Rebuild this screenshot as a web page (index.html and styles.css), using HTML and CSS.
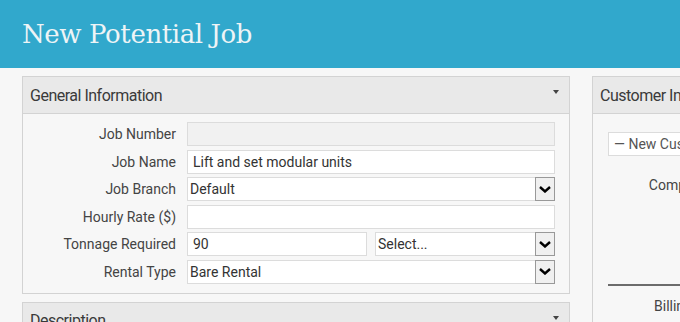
FILE: index.html
```html
<!DOCTYPE html>
<html lang="en">
<head>
    <meta charset="UTF-8">
    <meta name="viewport" content="width=device-width, initial-scale=1.0">
    <title>New Potential Job</title>
    <link rel="stylesheet" href="styles.css">
</head>
<body>

    <header class="page-header">
        <h1>New Potential Job</h1>
    </header>

    <div class="columns">
        <div class="column">
            <section class="panel">
                <div class="panel-head">
                    <h2>General Information</h2>
                    <span class="caret"></span>
                </div>
                <div class="panel-body form-grid">
                    <label>Job Number</label>
                    <div class="field disabled"></div>

                    <label>Job Name</label>
                    <div class="field">Lift and set modular units</div>

                    <label>Job Branch</label>
                    <div class="field select">
                        <span class="value">Default</span>
                        <span class="arrow"><svg width="12" height="7" viewBox="0 0 12 7"><path d="M1 1 L6 5.5 L11 1" fill="none" stroke="#000" stroke-width="2.4"/></svg></span>
                    </div>

                    <label>Hourly Rate ($)</label>
                    <div class="field"></div>

                    <label>Tonnage Required</label>
                    <div class="pair">
                        <div class="field">90</div>
                        <div class="field select">
                            <span class="value">Select...</span>
                            <span class="arrow"><svg width="12" height="7" viewBox="0 0 12 7"><path d="M1 1 L6 5.5 L11 1" fill="none" stroke="#000" stroke-width="2.4"/></svg></span>
                        </div>
                    </div>

                    <label>Rental Type</label>
                    <div class="field select">
                        <span class="value">Bare Rental</span>
                        <span class="arrow"><svg width="12" height="7" viewBox="0 0 12 7"><path d="M1 1 L6 5.5 L11 1" fill="none" stroke="#000" stroke-width="2.4"/></svg></span>
                    </div>
                </div>
            </section>

            <section class="panel">
                <div class="panel-head">
                    <h2>Description</h2>
                    <span class="caret"></span>
                </div>
            </section>
        </div>

        <div class="column">
            <section class="panel">
                <div class="panel-head">
                    <h2>Customer Information</h2>
                    <span class="caret"></span>
                </div>
                <div class="panel-body customer">
                    <div class="field">&mdash; New Customer &mdash;</div>
                    <div class="customer-row">
                        <label>Company</label>
                        <div class="field"></div>
                    </div>
                    <div class="customer-spacer"></div>
                    <hr>
                    <div class="customer-row billing">
                        <label>Billing</label>
                        <div class="field"></div>
                    </div>
                </div>
            </section>
        </div>
    </div>

</body>
</html>
```

FILE: styles.css
```css
body {
    margin: 0;
    background-color: #f7f7f7;
    font-family: Roboto, 'Liberation Sans', sans-serif;
    color: #444;
    overflow: hidden;
}
.page-header {
    height: 68px;
    background-color: #31a8cc;
    padding-left: 22px;
    display: flex;
    align-items: center;
}
.page-header h1 {
    margin: 0;
    font-family: 'DejaVu Serif', serif;
    font-weight: normal;
    font-size: 26px;
    letter-spacing: -0.4px;
    color: #eef4f6;
}
.columns {
    display: grid;
    grid-template-columns: 548px 548px;
    column-gap: 22px;
    padding: 8px 22px;
    width: 1200px;
}
.column {
    display: flex;
    flex-direction: column;
    gap: 8px;
}
.panel {
    border: 1px solid #d3d3d3;
    background-color: #f7f7f7;
}
.panel-head {
    height: 36px;
    background-color: #e9e9e9;
    border-bottom: 1px solid #d3d3d3;
    display: flex;
    align-items: center;
    justify-content: space-between;
    padding: 0 10px 0 7px;
}
.panel-head h2 {
    margin: 0;
    font-size: 16px;
    letter-spacing: -0.5px;
    font-weight: normal;
    color: #3a3a3a;
}
.caret {
    width: 0;
    height: 0;
    border-left: 3.5px solid transparent;
    border-right: 3.5px solid transparent;
    border-top: 4px solid #444;
    margin-top: -6px;
}
.form-grid {
    display: grid;
    grid-template-columns: 153px 1fr;
    column-gap: 11px;
    row-gap: 3.6px;
    padding: 8px 14px 9px 0;
    align-items: center;
}
.form-grid label {
    text-align: right;
    font-size: 14px;
}
.field {
    height: 24px;
    box-sizing: border-box;
    border: 1px solid #dcdcdc;
    background-color: #fff;
    font-size: 14px;
    color: #333;
    padding: 0 5px;
    display: flex;
    align-items: center;
}
.field.disabled {
    background-color: #f1f1f1;
}
.select {
    padding: 0 0 0 2px;
}
.select .value {
    flex: 1;
}
.arrow {
    width: 20px;
    height: 24px;
    margin: -1px -1px -1px 0;
    box-sizing: border-box;
    border: 1px solid #999;
    background-color: #f0f0f0;
    display: flex;
    align-items: center;
    justify-content: center;
}
.pair {
    display: grid;
    grid-template-columns: 1fr 1fr;
    column-gap: 8px;
}
.customer {
    padding: 18px 15px;
}
.customer .field {
    color: #555;
}
.customer-row {
    display: grid;
    grid-template-columns: 100px 1fr;
    column-gap: 11px;
    margin-top: 17px;
    align-items: center;
    font-size: 14px;
}
.customer-row label {
    text-align: right;
    padding-left: 38px;
}
.customer-row.billing {
    margin-top: 8px;
}
.customer-row.billing label {
    text-align: left;
    padding-left: 46px;
}
.customer-spacer {
    height: 87px;
}
.customer hr {
    border: none;
    border-top: 2px solid #6c6c6c;
    margin: 0;
}
```
